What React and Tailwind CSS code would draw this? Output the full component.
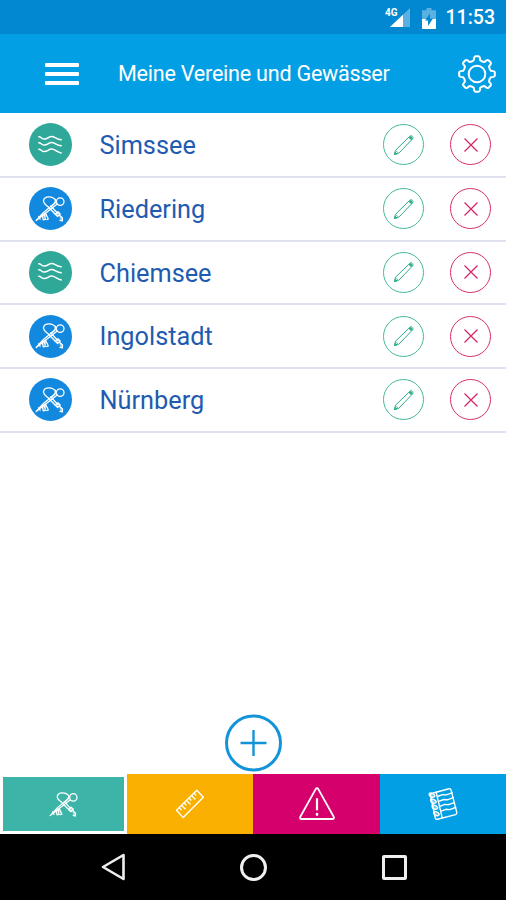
import React from 'react';

const ENTRIES = [
  { name: 'Simssee', type: 'water' },
  { name: 'Riedering', type: 'club' },
  { name: 'Chiemsee', type: 'water' },
  { name: 'Ingolstadt', type: 'club' },
  { name: 'Nürnberg', type: 'club' },
];

// 8 teeth, each one a flat top between two rounded valleys
const polar = (r, deg) => {
  const a = ((deg - 90) * Math.PI) / 180;
  return `${(19 + r * Math.cos(a)).toFixed(2)} ${(19 + r * Math.sin(a)).toFixed(2)}`;
};

const GEAR_PATH = Array.from({ length: 8 }, (_, i) => {
  const t = i * 45;
  return `${i ? 'L' : 'M'}${polar(14.2, t - 13)}L${polar(16.6, t - 10)}Q${polar(17.9, t - 8)} ${polar(17.9, t - 5)}L${polar(17.9, t + 5)}Q${polar(17.9, t + 8)} ${polar(16.6, t + 10)}L${polar(14.2, t + 13)}Q${polar(13.2, t + 22.5)} ${polar(14.2, t + 32)}`;
}).join('') + 'Z';

const KeysIcon = ({ className = '' }) => (
  <svg viewBox="0 0 30 26" className={className} fill="none" stroke="currentColor" strokeWidth="1.3" strokeLinecap="round" strokeLinejoin="round">
    <circle cx="25.2" cy="5.6" r="3.8" />
    <path d="M21.4 5C19.500 2 17 .8 14 .8 10.500.8 8.300 2.800 8.500 5.300c.2 2.400 2.200 3.500 4.300 5.200l7.500 7.700" />
    <path d="M20.300 3.500c.5 2.400-1.200 4.600-3.300 6.300" />
    <path d="M22.200 8 1.200 24.500M20.300 6.700 8.500 16.500 1.200 24.500" />
    <path d="M15.800 10 22.500 17.300" />
    <path d="m7 18.500 1.300 5.300 2-.4-.8-5.200M10.500 17.300l2.800 5.700-1.500.6M3.800 20.500l1.300 2.700" />
    <path d="M10 16 5 20.500l3.500 1 3.300-1.200z" fill="currentColor" fillOpacity=".4" stroke="none" />
    <path d="M20.300 18.200l2.600-2.500 2.300 2.300-2.600 2.500zM24.300 19l3.200 3-.2 3-2.300-.7" fill="currentColor" fillOpacity=".5" />
  </svg>
);

const WavesIcon = () => (
  <svg viewBox="0 0 24 20" className="h-5 w-6" fill="none" stroke="currentColor" strokeWidth="1.500" strokeLinecap="round" strokeLinejoin="round">
    <path d="M.8 1.700C3 1.500 3.500 4.300 6.500 4.100S10.700 1.500 13.700 1.500s4.700 2.700 9.500 3.300" />
    <path d="M.8 7.700c2.200-.2 2.700 2.600 5.700 2.400s4.200-2.600 7.200-2.600 4.700 2.700 9.500 3.300" />
    <path d="M.8 14.200c2.200-.2 2.700 2.600 5.700 2.400s4.200-2.600 7.200-2.600 4.700 2.700 9.500 3.900" />
  </svg>
);

const PencilIcon = () => (
  <svg viewBox="0 0 22 22" className="h-[22px] w-[22px]" fill="none" stroke="currentColor" strokeWidth="1" strokeLinejoin="round">
    <path d="m1.500 20.500.9-4.100L17 2.100q1-.9 2 .1l.7.700q.9 1-.1 2L5.500 19.500z" />
    <path d="m2.700 16.400 2.800 3" strokeWidth=".8" />
    <path d="m1.500 20.500.7-2.400 1.700 1.700zM17.600 2.600l1.700 1.700-1.300 1.300-1.700-1.700z" fill="currentColor" />
  </svg>
);

const GearIcon = () => (
  <svg viewBox="0 0 38 38" className="h-[38px] w-[38px]" fill="none" stroke="currentColor" strokeWidth="2" strokeLinejoin="round">
    <circle cx="19" cy="19" r="8.300" />
    <path d={GEAR_PATH} />
  </svg>
);

const RulerIcon = () => (
  <svg viewBox="0 0 30 30" className="h-[30px] w-[30px]" fill="none" stroke="currentColor" strokeWidth="1.400" strokeLinejoin="round">
    <path d="M1.500 21.300 21.800 1.200 28.300 8.300 8.200 28.600z" />
    <path d="m4.200 18.600 2.300 2.500M6.500 16.300l4 4M9.100 13.800l2.300 2.400M11.500 11.400l4 4M14 9l2.300 2.400M16.400 6.600l4 4M18.900 4.100l2.300 2.400" />
  </svg>
);

const WarningIcon = () => (
  <svg viewBox="0 0 36 34" className="h-[34px] w-9" fill="none" stroke="currentColor" strokeWidth="1.800" strokeLinecap="round" strokeLinejoin="round">
    <path d="M16.700 2.100Q18 .3 19.300 2.100L34.700 29.800Q35.600 32 33.300 32H2.700Q.4 32 1.300 29.800z" />
    <path d="M18 12v10.500" strokeWidth="2.200" />
    <path d="M18 27v.6" strokeWidth="2.600" />
  </svg>
);

const NotebookIcon = () => (
  <svg viewBox="0 0 32 34" className="h-[34px] w-8" fill="none" stroke="currentColor" strokeWidth="1.400" strokeLinecap="round" strokeLinejoin="round">
    <path d="M4.500 6.500 22 1.700q1.500-.3 2 1.200l5.800 22.500q.3 1.600-1.200 2.200L10.500 32.300q-1.700.3-2.200-1.300L3.500 8.500q-.3-1.500 1-2z" />
    <path d="m9.200 5.300 6 25.500" />
    <path d="m10.500 9.500 5-1.900 3.600.3 6-2.100M11.700 14.400l5-1.900 3.600.3 6-2.100M12.800 19.300l5-1.900 3.600.3 6-2.100M14 24.200l5-1.900 3.600.3 6-2.100" />
    <path d="M2.300 8q-.6-2.500 2-1.900t3.500 2.500q-.3 2-2.600 1.600T2.300 8zM3.700 14q-.6-2.500 2-1.900t3.500 2.500q-.3 2-2.600 1.600T3.700 14zM5.200 20q-.6-2.500 2-1.900t3.500 2.500q-.3 2-2.600 1.600T5.200 20zM6.700 26.500q-.6-2.500 2-1.900t3.500 2.500q-.3 2-2.600 1.600t-2.900-2.200z" fill="currentColor" fillOpacity=".4" />
  </svg>
);

const StatusBar = () => (
  <div className="flex h-[34px] shrink-0 items-center justify-end bg-[#0288d1] pr-[11px] pt-[2px] text-white">
    <svg viewBox="0 0 26 22" className="mr-[11px] h-[22px] w-[26px]">
      <path d="M25 1v19H5z" fill="#fff" fillOpacity=".35" />
      <path d="M18 7.700V20H5z" fill="#fff" />
      <text x="0" y="9" fontFamily="Roboto, sans-serif" fontSize="11" fontWeight="700" fill="#fff" textLength="12.500" lengthAdjust="spacingAndGlyphs">4G</text>
    </svg>
    <svg viewBox="0 0 14 21" className="mr-[10px] h-[21px] w-[14px]">
      <path d="M4.500 0h5v2.200H14V11H0V2.200h4.500z" fill="#fff" fillOpacity=".35" />
      <path d="M0 11h14v9q0 1-1 1H1q-1 0-1-1z" fill="#fff" />
      <path d="M8 5.500v5h3L6 18v-5.500H3z" fill="#0288d1" />
    </svg>
    <span className="text-[19.500px] font-medium leading-none">11:53</span>
  </div>
);

const Header = () => (
  <header className="flex h-[79px] shrink-0 items-center bg-[#039fe5] pl-[45px] pr-[10px] text-white">
    <button className="flex w-[34px] flex-col gap-[5px]">
      <span className="h-1 w-full rounded-[1px] bg-white" />
      <span className="h-1 w-full rounded-[1px] bg-white" />
      <span className="h-1 w-full rounded-[1px] bg-white" />
    </button>
    <h1 className="ml-[39px] flex-1 whitespace-nowrap pt-px text-[21.600px] leading-none tracking-[-0.250px]">Meine Vereine und Gewässer</h1>
    <button><GearIcon /></button>
  </header>
);

const EntryRow = ({ name, type }) => (
  <li className="flex h-[63.750px] items-center border-b-2 border-[#dfe0f0] pl-[28.500px] pr-[15px]">
    <span className={`flex h-[43px] w-[43px] items-center justify-center rounded-full text-white ${type === 'water' ? 'bg-[#2fa899]' : 'bg-[#1289de]'}`}>
      {type === 'water' ? <WavesIcon /> : <KeysIcon className="h-[26px] w-[30px]" />}
    </span>
    <span className="ml-[28px] flex-1 pt-[2px] text-[25.300px] leading-none text-[#1f5bb0]">{name}</span>
    <button className="flex h-[41px] w-[41px] items-center justify-center rounded-full border-[1.500px] border-[#49b79c] text-[#2fae8c]">
      <PencilIcon />
    </button>
    <button className="ml-[26px] flex h-[41px] w-[41px] items-center justify-center rounded-full border-[1.500px] border-[#d92d6c] text-[#d3296a]">
      <svg viewBox="0 0 14 14" className="h-3.5 w-3.5" fill="none" stroke="currentColor" strokeWidth="1.300">
        <path d="m.5.5 13 13M13.500.5l-13 13" />
      </svg>
    </button>
  </li>
);

const TabBar = () => (
  <nav className="grid h-[60px] shrink-0 grid-cols-4 text-white">
    <button className="flex items-center justify-center border-[3px] border-white bg-[#3cb5a8]">
      <KeysIcon className="h-[25px] w-[29px]" />
    </button>
    <button className="flex items-center justify-center bg-[#f9b000]"><RulerIcon /></button>
    <button className="flex items-center justify-center bg-[#d6006d] pl-px"><WarningIcon /></button>
    <button className="flex items-center justify-center bg-[#039fe5]"><NotebookIcon /></button>
  </nav>
);

const SystemNav = () => (
  <div className="flex h-[66px] shrink-0 items-center justify-between bg-black pl-[99px] pr-[99px] text-[#efefef]">
    <svg viewBox="0 0 26 28" className="h-7 w-[26px]" fill="none" stroke="currentColor" strokeWidth="2.600" strokeLinejoin="round">
      <path d="M24.500 2v24L4 14z" />
    </svg>
    <span className="h-[27px] w-[27px] rounded-full border-[3px] border-current" />
    <span className="h-[25px] w-[25px] rounded-[2px] border-[3px] border-current" />
  </div>
);

export default function App() {
  return (
    <div className="flex h-[900px] w-[506px] flex-col overflow-hidden bg-white font-['Roboto',sans-serif]">
      <StatusBar />
      <Header />
      <ul className="pt-px">
        {ENTRIES.map((e) => <EntryRow key={e.name} {...e} />)}
      </ul>
      <div className="flex flex-1 items-end justify-center pb-[2px]">
        <button className="text-[#1494d8]">
          <svg viewBox="0 0 58 58" className="block h-[58px] w-[58px]" fill="none" stroke="currentColor">
            <circle cx="29.500" cy="29" r="27" strokeWidth="3" />
            <path d="M29.500 16v26M16.500 29h26" strokeWidth="2.400" />
          </svg>
        </button>
      </div>
      <TabBar />
      <SystemNav />
    </div>
  );
}
